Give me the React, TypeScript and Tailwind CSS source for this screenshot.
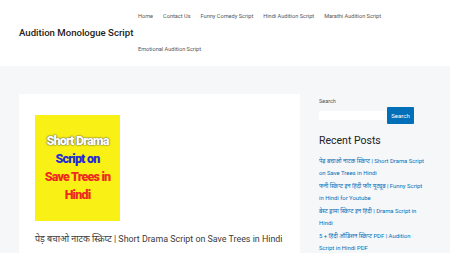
import React from 'react';

const navItems = [
  'Home',
  'Contact Us',
  'Funny Comedy Script',
  'Hindi Audition Script',
  'Marathi Audition Script',
  'Emotional Audition Script',
];

const recentPosts = [
  ['पेड़ बचाओ नाटक स्क्रिप्ट | Short Drama Script', 'on Save Trees in Hindi'],
  ['फनी स्क्रिप्ट इन हिंदी फॉर यूट्यूब | Funny Script', 'in Hindi for Youtube'],
  ['बेस्ट ड्रामा स्क्रिप्ट इन हिंदी | Drama Script in', 'Hindi'],
  ['5 + हिंदी ऑडिशन स्क्रिप्ट PDF | Audition', 'Script in Hindi PDF'],
];

const font = { fontFamily: 'Roboto, "Noto Sans", "Noto Sans Devanagari", sans-serif' };

export default function App() {
  return (
    <div className="w-[450px] h-[253px] overflow-hidden bg-[#f5f7f9]" style={font}>
      {/* header */}
      <header className="h-[66px] bg-white flex items-center pl-[19px]">
        <div className="w-[119px] whitespace-nowrap text-[9.6px] font-medium text-[#222]">
          Audition Monologue Script
        </div>
        <nav className="w-[293px] flex flex-wrap gap-x-[10px] self-start">
          {navItems.map((item) => (
            <span key={item} className="h-[33px] leading-[33px] text-[5.6px] text-[#555] whitespace-nowrap">
              {item}
            </span>
          ))}
        </nav>
      </header>

      {/* content */}
      <div className="flex pt-[28px] pl-[19px] gap-[19px]">
        <main className="w-[281px] h-[200px] bg-white pt-[21px] px-[16px]">
          <div className="w-[85px] h-[106px] bg-[#f9f115] flex flex-col items-center justify-center font-black leading-[18px] tracking-[-0.8px] text-[12.5px]">
            <span className="text-white" style={{ textShadow: '0 0 2px #555, 0 0 1px #555' }}>Short Drama</span>
            <span className="text-[#1f2bd4]">Script on</span>
            <span className="text-[#ee2a22]">Save Trees in</span>
            <span className="text-[#ee2a22]">Hindi</span>
          </div>
          <h2 className="mt-[12px] text-[8.9px] text-[#3a3a3a] whitespace-nowrap">
            पेड़ बचाओ नाटक स्क्रिप्ट | Short Drama Script on Save Trees in Hindi
          </h2>
        </main>

        <aside className="w-[110px] pt-[3px]">
          <div className="text-[5.5px] text-[#555]">Search</div>
          <div className="flex items-center mt-[2px]">
            <div className="w-[68px] h-[9px] bg-white" />
            <button className="w-[27px] h-[17px] bg-[#0170b9] text-white text-[6px] rounded-[1px]">Search</button>
          </div>
          <h3 className="mt-[10px] text-[10.5px] text-[#222] leading-[14px]">Recent Posts</h3>
          <ul className="mt-[7px] flex flex-col gap-[1px]">
            {recentPosts.map(([a, b]) => (
              <li key={a} className="text-[5.9px] leading-[12px] text-[#0170b9] whitespace-nowrap">
                <div>{a}</div>
                <div>{b}</div>
              </li>
            ))}
          </ul>
        </aside>
      </div>
    </div>
  );
}
